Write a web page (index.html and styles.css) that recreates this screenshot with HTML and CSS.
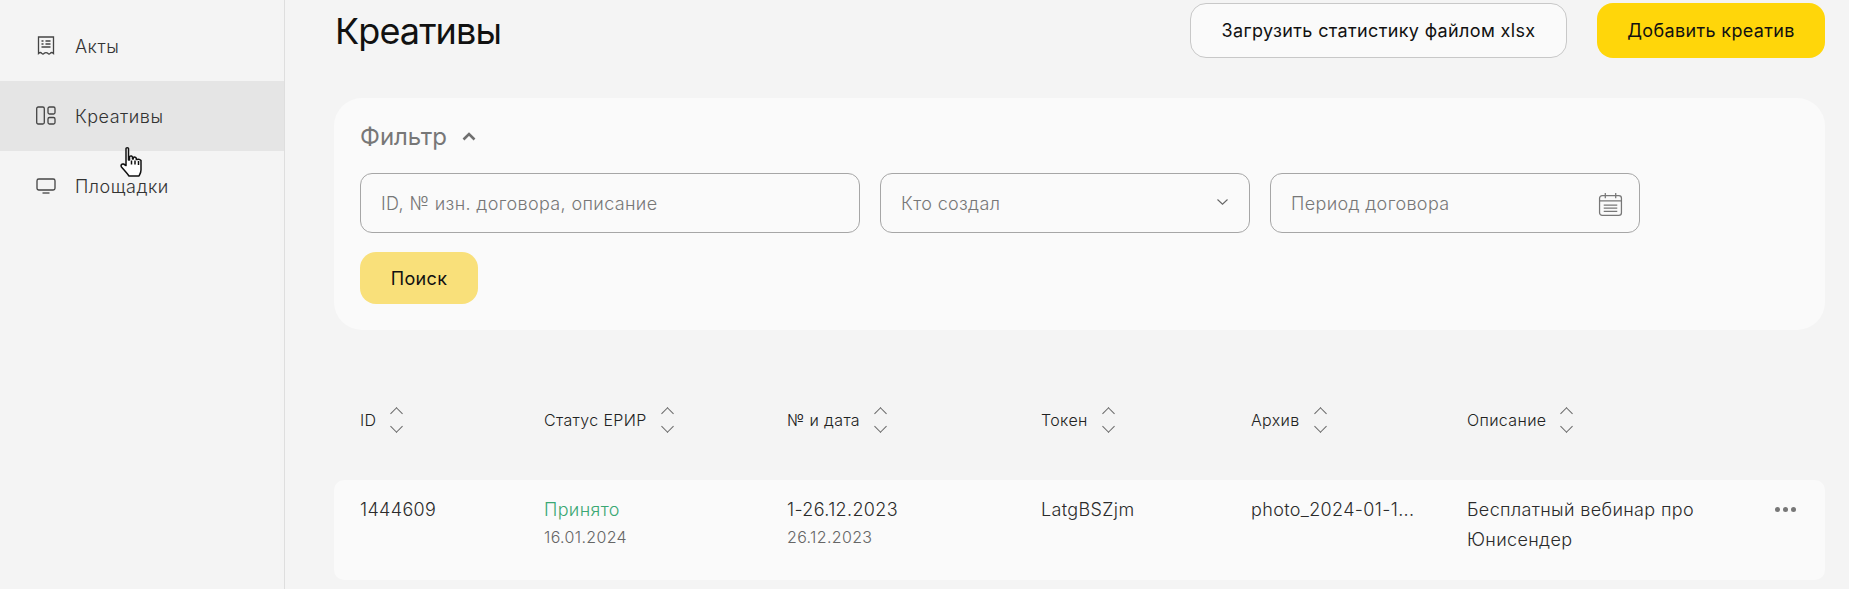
FILE: index.html
```html
<!DOCTYPE html>
<html lang="ru">
<head>
<meta charset="utf-8">
<title>Креативы</title>
<link rel="stylesheet" href="styles.css">
</head>
<body>
<div class="page">
  <aside class="sidebar">
    <a class="nav-item">
      <svg class="nav-icon" viewBox="0 0 20 20" fill="none" stroke="#444" stroke-width="1.3"><path d="M2.500 1h15v16.500c-1.300-1.300-2.200-1.300-3.200-.2-1 1-1.600 1-2.500 0-.9-1-2.700-1-3.600 0-.9 1-1.500 1-2.500 0-1-1.100-1.900-1.100-3.200.2z"/><path d="M5.500 5h2M5.500 8h2M9.500 5h5M9.500 8h5M5.500 11h9"/></svg>
      <span>Акты</span>
    </a>
    <a class="nav-item active">
      <svg class="nav-icon" viewBox="0 0 20 20" fill="none" stroke="#444" stroke-width="1.3"><rect x="0.700" y="1" width="7.600" height="17" rx="1.500"/><rect x="12" y="1" width="7" height="7" rx="1.500"/><rect x="12" y="11.500" width="7" height="6.500" rx="1.500"/></svg>
      <span>Креативы</span>
    </a>
    <a class="nav-item">
      <svg class="nav-icon" viewBox="0 0 20 20" fill="none" stroke="#444" stroke-width="1.3"><rect x="1" y="3" width="18" height="11" rx="1.800"/><path d="M6.500 17h7"/></svg>
      <span>Площадки</span>
    </a>
  </aside>
  <main class="main">
    <header class="topbar">
      <h1 class="title">Креативы</h1>
      <div class="actions">
        <button class="btn btn-outline">Загрузить статистику файлом xlsx</button>
        <button class="btn btn-primary">Добавить креатив</button>
      </div>
    </header>
    <section class="filter">
      <div class="filter-head">
        <span>Фильтр</span>
        <svg class="filter-chevron" viewBox="0 0 14 9" fill="none" stroke="#6f6f6f" stroke-width="2.600"><path d="M1.500 7.500 7 2l5.500 5.500"/></svg>
      </div>
      <div class="filter-fields">
        <div class="field field-wide">ID, № изн. договора, описание</div>
        <div class="field">Кто создал
          <svg class="field-chevron" viewBox="0 0 11 6" fill="none" stroke="#666" stroke-width="1.100"><path d="M.5.500 5.500 5.200l5-4.700"/></svg>
        </div>
        <div class="field">Период договора
          <svg class="field-calendar" viewBox="0 0 24 24" fill="none" stroke="#777" stroke-width="1.200"><rect x="1.500" y="3.500" width="21" height="19" rx="2.500"/><path d="M1.500 8.500h21M7 1v5M17 1v5M5.500 12.500h13M5.500 15.500h13M5.500 18.500h13"/></svg>
        </div>
      </div>
      <button class="btn-search">Поиск</button>
    </section>
    <section class="table">
      <div class="table-head">
        <div class="th">ID<span class="sort"><i class="up"></i><i class="down"></i></span></div>
        <div class="th">Статус ЕРИР<span class="sort"><i class="up"></i><i class="down"></i></span></div>
        <div class="th">№ и дата<span class="sort"><i class="up"></i><i class="down"></i></span></div>
        <div class="th">Токен<span class="sort"><i class="up"></i><i class="down"></i></span></div>
        <div class="th">Архив<span class="sort"><i class="up"></i><i class="down"></i></span></div>
        <div class="th">Описание<span class="sort"><i class="up"></i><i class="down"></i></span></div>
      </div>
      <div class="table-row">
        <div>1444609</div>
        <div><div class="status">Принято</div><div class="sub">16.01.2024</div></div>
        <div><div>1-26.12.2023</div><div class="sub">26.12.2023</div></div>
        <div>LatgBSZjm</div>
        <div>photo_2024-01-1...</div>
        <div class="desc">Бесплатный вебинар про Юнисендер</div>
        <div class="dots"><i></i><i></i><i></i></div>
      </div>
    </section>
  </main>
</div>
<svg class="cursor" viewBox="0 0 23 31"><path d="M6 1.500c0-1 2.500-1 2.500 0V13h1V9.500c1.500-1 2.500-.5 3 .5v2h.8v-1.500c1.300-.8 2.500-.3 3 .8v1.200h.7c1.500-.5 3-.2 4 1V23c0 2.500-1 4-2 6H9c-2-3-5-6-7.500-9-1-1.500 0-3.500 2-3l2.500 1.500z" fill="#fff" stroke="#111" stroke-width="1.500" stroke-linejoin="round"/><path d="M11.500 13.500v4M15 13.500v4M18.500 14v4" stroke="#111" stroke-width="1.500"/></svg>
</body>
</html>
```
FILE: styles.css
```css
* { box-sizing: border-box; }
html, body { margin: 0; height: 100%; overflow: hidden; }
body {
  background: #f4f4f4;
  color: #2b2b2b;
  font-family: Inter, "Noto Sans", sans-serif;
  font-size: 18px;
  font-weight: 300;
  letter-spacing: 0.35px;
}
.page { display: flex; height: 589px; position: relative; }

.sidebar {
  width: 285px;
  flex: none;
  padding-top: 11px;
  border-right: 1px solid #dedede;
}
.nav-item {
  display: flex;
  align-items: center;
  gap: 19px;
  height: 70px;
  padding-left: 36px;
  color: #333;
  letter-spacing: 0.5px;
}
.nav-item.active { background: #e5e5e5; }
.nav-icon { width: 20px; height: 20px; flex: none; }

.main { flex: 1; min-width: 0; padding: 3px 24px 0 49px; }
.topbar { display: flex; justify-content: space-between; align-items: center; height: 55px; }
.title { margin: 0 0 0 1px; font-size: 36px; font-weight: 400; color: #111; letter-spacing: -0.9px; }
.actions { display: flex; gap: 30px; }
.btn {
  height: 55px;
  border-radius: 16px;
  font: inherit;
  letter-spacing: inherit;
  color: #111;
  border: 1px solid transparent;
}
.btn-outline { width: 377px; background: #fafafa; border-color: #c8c8c8; font-weight: 400; }
.btn-primary { width: 228px; background: #ffd60a; font-weight: 400; }

.filter {
  margin-top: 40px;
  height: 232px;
  padding: 22px 26px 0;
  background: #fafafa;
  border-radius: 28px;
}
.filter-head {
  display: flex;
  align-items: center;
  gap: 15px;
  height: 32px;
  font-size: 24px;
  font-weight: 400;
  letter-spacing: 0;
  color: #777;
}
.filter-chevron { width: 14px; height: 9px; }
.filter-fields { display: flex; gap: 20px; margin-top: 21px; }
.field {
  position: relative;
  width: 370px;
  height: 60px;
  padding-left: 20px;
  display: flex;
  align-items: center;
  border: 1px solid #a6a6a6;
  border-radius: 12px;
  color: #777;
}
.field-wide { width: 500px; }
.field-chevron { position: absolute; right: 21px; top: 25px; width: 11px; height: 6px; }
.field-calendar { position: absolute; right: 16px; top: 18px; width: 25px; height: 25px; }
.btn-search {
  display: block;
  margin-top: 19px;
  width: 118px;
  height: 52px;
  border: 0;
  border-radius: 16px;
  background: #f9e07a;
  font: inherit;
  letter-spacing: inherit;
  font-weight: 400;
  color: #111;
}

.table-head, .table-row {
  display: grid;
  grid-template-columns: 184px 243px 254px 210px 216px 308px 1fr;
  padding-left: 26px;
}
.table-head { height: 150px; align-items: center; padding-top: 30px; }
.th { display: flex; align-items: center; gap: 13px; font-size: 16px; color: #222; }
.sort { display: flex; flex-direction: column; gap: 7px; width: 14px; }
.sort i { display: block; width: 9px; height: 9px; margin-left: 3px; border: solid #666; border-width: 1px 0 0 1px; }
.sort .up { transform: rotate(45deg); }
.sort .down { transform: rotate(225deg); margin-top: -3px; }
.table-row {
  height: 100px;
  padding-top: 15px;
  background: #fafafa;
  border-radius: 10px;
  line-height: 30px;
  color: #2b2b2b;
}
.status { color: #3aa873; }
.sub { font-size: 16px; color: #666; line-height: 26px; margin-top: -1px; }
.desc { width: 260px; line-height: 30px; }
.dots { display: flex; gap: 3px; padding-top: 12px; }
.dots i { width: 5px; height: 5px; border-radius: 50%; background: #777; }

.cursor { position: absolute; left: 120px; top: 147px; width: 23px; height: 31px; }
```
